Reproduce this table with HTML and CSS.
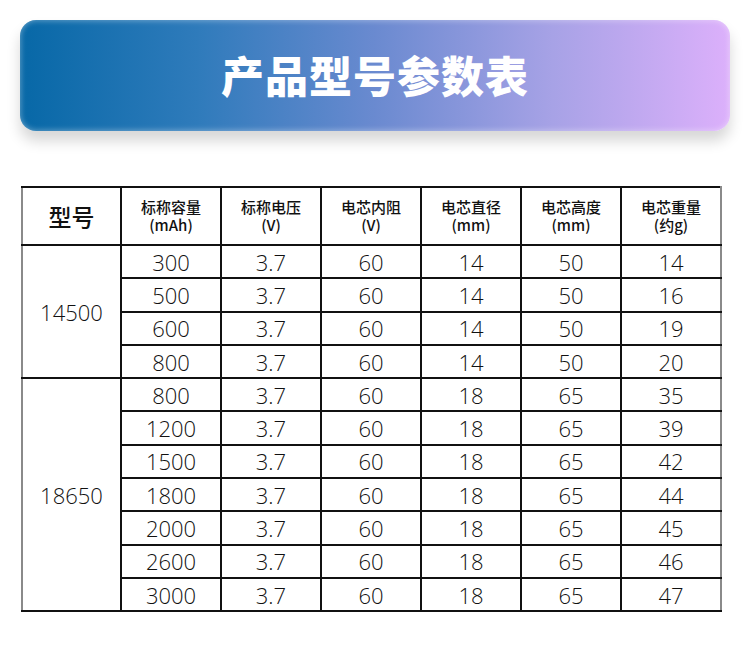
FILE: index.html
```html
<!DOCTYPE html>
<html lang="zh">
<head>
<meta charset="utf-8">
<link rel="stylesheet" href="styles.css">
</head>
<body>
<div class="page">
  <div class="banner"><h1 class="title">产品型号参数表</h1></div>
  <table class="spec">
    <colgroup>
      <col class="c-first"><col class="c"><col class="c"><col class="c"><col class="c"><col class="c"><col class="c">
    </colgroup>
    <thead>
      <tr>
        <th class="h-model">型号</th>
        <th><span class="hl">标称容量</span><span class="hl">(mAh)</span></th>
        <th><span class="hl">标称电压</span><span class="hl">(V)</span></th>
        <th><span class="hl">电芯内阻</span><span class="hl">(V)</span></th>
        <th><span class="hl">电芯直径</span><span class="hl">(mm)</span></th>
        <th><span class="hl">电芯高度</span><span class="hl">(mm)</span></th>
        <th><span class="hl">电芯重量</span><span class="hl">(约g)</span></th>
      </tr>
    </thead>
    <tbody>
      <tr><td class="model" rowspan="4">14500</td><td>300</td><td>3.7</td><td>60</td><td>14</td><td>50</td><td>14</td></tr>
      <tr><td>500</td><td>3.7</td><td>60</td><td>14</td><td>50</td><td>16</td></tr>
      <tr><td>600</td><td>3.7</td><td>60</td><td>14</td><td>50</td><td>19</td></tr>
      <tr><td>800</td><td>3.7</td><td>60</td><td>14</td><td>50</td><td>20</td></tr>
      <tr><td class="model" rowspan="7">18650</td><td>800</td><td>3.7</td><td>60</td><td>18</td><td>65</td><td>35</td></tr>
      <tr><td>1200</td><td>3.7</td><td>60</td><td>18</td><td>65</td><td>39</td></tr>
      <tr><td>1500</td><td>3.7</td><td>60</td><td>18</td><td>65</td><td>42</td></tr>
      <tr><td>1800</td><td>3.7</td><td>60</td><td>18</td><td>65</td><td>44</td></tr>
      <tr><td>2000</td><td>3.7</td><td>60</td><td>18</td><td>65</td><td>45</td></tr>
      <tr><td>2600</td><td>3.7</td><td>60</td><td>18</td><td>65</td><td>46</td></tr>
      <tr><td>3000</td><td>3.7</td><td>60</td><td>18</td><td>65</td><td>47</td></tr>
    </tbody>
  </table>
</div>
</body>
</html>
```

FILE: styles.css
```css
html, body {
  margin: 0;
  padding: 0;
  background: #ffffff;
}
.page {
  width: 750px;
  height: 650px;
  padding-top: 20px;
  box-sizing: border-box;
  font-family: "Open Sans", "Noto Sans CJK SC", sans-serif;
}
.banner {
  margin: 0 20px;
  height: 111px;
  border-radius: 16px;
  background: linear-gradient(90deg, #0768a7 0%, #2f7bbb 25%, #6a8ad0 50%, #a7a2e6 75%, #dcb0fb 100%);
  box-shadow: 0 10px 14px rgba(0, 0, 0, 0.16), inset 0 0 6px rgba(255, 255, 255, 0.45);
  display: flex;
  align-items: center;
  justify-content: center;
}
.title {
  margin: 0;
  color: #ffffff;
  font-family: "Noto Sans CJK SC", sans-serif;
  font-weight: 900;
  font-size: 43px;
  letter-spacing: 1px;
  line-height: 1;
  padding-bottom: 2px;
}
.spec {
  margin: 55px 0 0 21px;
  width: 699px;
  border-collapse: collapse;
  table-layout: fixed;
  border-top: 2px solid #111;
  border-bottom: 2px solid #111;
  border-left: 2px solid #8a8a8a;
  border-right: 2px solid #8a8a8a;
}
.c-first { width: 99px; }
.c { width: 100px; }
.spec th, .spec td {
  border: 2px solid #111;
  text-align: center;
  padding: 0;
  color: #111;
}
.spec th:first-child, .spec td.model { border-left: 2px solid #8a8a8a; }
.spec th:last-child, .spec td:last-child { border-right: 2px solid #8a8a8a; }
.spec th {
  height: 56px;
  font-family: "Noto Sans CJK SC", sans-serif;
  font-weight: 500;
  font-size: 15px;
  line-height: 18px;
}
.hl {
  display: block;
  line-height: 18px;
}
.spec th.h-model {
  font-size: 23px;
  font-weight: 500;
}
.spec td {
  height: 31.3px;
  font-weight: 300;
  font-size: 22px;
  line-height: 30px;
}
.spec td.model {
  color: #111;
}
```
